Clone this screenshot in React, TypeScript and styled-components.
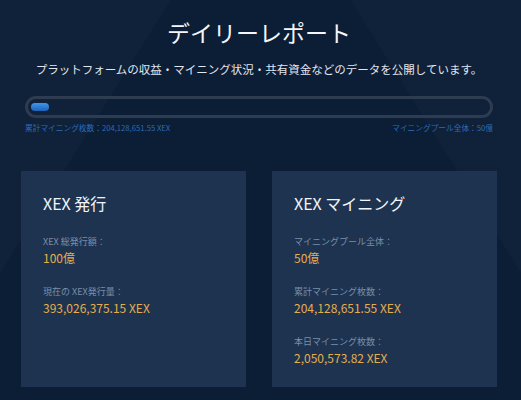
import React from "react";
import styled, { createGlobalStyle } from "styled-components";

const GlobalStyle = createGlobalStyle`
  html, body {
    margin: 0;
    padding: 0;
    background: #0c1d36;
  }
  body {
    font-family: "Noto Sans CJK JP", "Noto Sans", sans-serif;
  }
`;

const Page = styled.div`
  width: 521px;
  height: 400px;
  box-sizing: border-box;
  padding: 18px 28px 0 21px;
  overflow: hidden;
  background-color: #0c1d36;
  background-image: linear-gradient(
      122deg,
      rgba(255, 255, 255, 0.018) 0%,
      rgba(255, 255, 255, 0.018) 22%,
      rgba(0, 0, 0, 0) 22.2%
    ),
    linear-gradient(
      -122deg,
      rgba(255, 255, 255, 0.014) 0%,
      rgba(255, 255, 255, 0.014) 22%,
      rgba(0, 0, 0, 0) 22.2%
    );
`;

const Title = styled.h1`
  margin: 0;
  text-align: center;
  font-size: 23px;
  line-height: 28px;
  font-weight: 400;
  color: #f4f6f9;
  padding-left: 4px;
`;

const Subtitle = styled.p`
  margin: 15px 0 0;
  text-align: center;
  font-size: 11.5px;
  line-height: 16px;
  color: #e2e7ee;
  padding-left: 4px;
`;

const ProgressWrap = styled.div`
  margin: 19px 0 0 4px;
`;

const Track = styled.div`
  height: 22px;
  box-sizing: border-box;
  border: 3px solid #2d3c50;
  border-radius: 11px;
  padding: 4px 3px;
  display: flex;
  align-items: center;
`;

const Fill = styled.div`
  height: 8px;
  border-radius: 4px;
  background: linear-gradient(180deg, #3f97ea 0%, #1d62b8 100%);
`;

const BarLabels = styled.div`
  margin-top: 4px;
  display: flex;
  justify-content: space-between;
  font-size: 7.7px;
  line-height: 12px;
  color: #2b6cb6;
`;

const Cards = styled.div`
  margin-top: 37px;
  display: grid;
  grid-template-columns: 225px 225px;
  gap: 26px;
`;

const Card = styled.section`
  height: 216px;
  box-sizing: border-box;
  padding: 21px 22px 0;
  background: #1e3350;
`;

const CardTitle = styled.h2`
  margin: 0 0 21px;
  font-size: 16px;
  line-height: 22px;
  font-weight: 400;
  color: #f2f5f9;
`;

const Stat = styled.div`
  margin-bottom: 19px;
`;

const StatLabel = styled.div`
  font-size: 9px;
  line-height: 14px;
  color: #7b8fa9;
`;

const StatValue = styled.div`
  margin-top: 1px;
  font-size: 12px;
  line-height: 16px;
  color: #e7ae4d;
`;

type StatItem = { label: string; value: string };

const issue: StatItem[] = [
  { label: "XEX 総発行額：", value: "100億" },
  { label: "現在の XEX発行量：", value: "393,026,375.15 XEX" },
];

const mining: StatItem[] = [
  { label: "マイニングプール全体：", value: "50億" },
  { label: "累計マイニング枚数：", value: "204,128,651.55 XEX" },
  { label: "本日マイニング枚数：", value: "2,050,573.82 XEX" },
];

const StatCard = ({ title, items }: { title: string; items: StatItem[] }) => (
  <Card>
    <CardTitle>{title}</CardTitle>
    {items.map((it) => (
      <Stat key={it.label}>
        <StatLabel>{it.label}</StatLabel>
        <StatValue>{it.value}</StatValue>
      </Stat>
    ))}
  </Card>
);

const App = () => {
  return (
    <Page>
      <GlobalStyle />
      <Title>デイリーレポート</Title>
      <Subtitle>
        プラットフォームの収益・マイニング状況・共有資金などのデータを公開しています。
      </Subtitle>
      <ProgressWrap>
        <Track>
          <Fill style={{ width: 18 }} />
        </Track>
        <BarLabels>
          <span>累計マイニング枚数：204,128,651.55 XEX</span>
          <span>マイニングプール全体：50億</span>
        </BarLabels>
      </ProgressWrap>
      <Cards>
        <StatCard title="XEX 発行" items={issue} />
        <StatCard title="XEX マイニング" items={mining} />
      </Cards>
    </Page>
  );
};

export default App;
